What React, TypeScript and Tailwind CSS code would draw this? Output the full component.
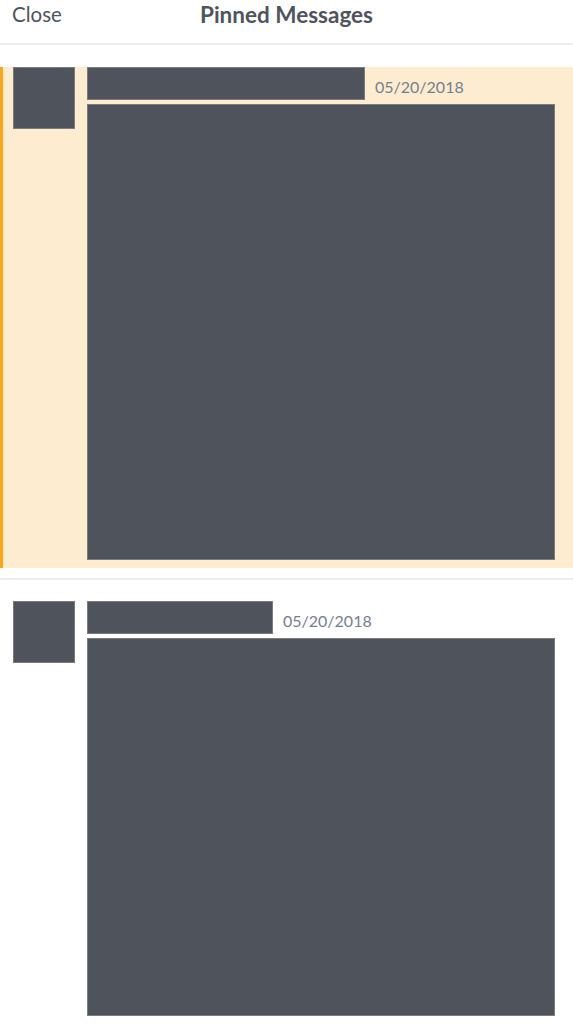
import React from 'react';

interface PinProps {
  nameWidth: number;
  imageHeight: number;
  date: string;
  highlighted?: boolean;
}

const block = 'bg-[#4f545c] border border-[#9a978f]/60';

const PinnedMessage: React.FC<PinProps> = ({ nameWidth, imageHeight, date, highlighted }) => {
  return (
    <div
      className={
        highlighted
          ? 'flex bg-[#feecd1] border-l-[3px] border-[#faa61a] pl-[10px] pr-[18px] pb-[8px]'
          : 'flex bg-white pl-[13px] pr-[18px] pt-[21px] pb-[8px]'
      }
    >
      <div className={`w-[62px] h-[62px] shrink-0 ${block}`} />
      <div className="ml-[12px] flex flex-col">
        <div className="flex items-center">
          <div className={`h-[33px] ${block}`} style={{ width: nameWidth }} />
          <span className="ml-[10px] mt-[7px] text-[16px] text-[#747f8d]">{date}</span>
        </div>
        <div className={`mt-[4px] w-[468px] ${block}`} style={{ height: imageHeight }} />
      </div>
    </div>
  );
};

const App: React.FC = () => {
  return (
    <div className="w-[573px] h-[1024px] overflow-hidden bg-white" style={{ fontFamily: 'Lato, "Open Sans", sans-serif' }}>
      <header className="relative h-[45px] border-b-2 border-[#ebedef]">
        <div className="flex items-start h-full">
          <span className="absolute left-[12px] top-0 leading-[29px] text-[20.5px] text-[#4f545c]">Close</span>
          <span className="w-full text-center leading-[29px] text-[22.5px] font-bold text-[#4f545c]">Pinned Messages</span>
        </div>
      </header>

      <div className="mt-[22px]">
        <PinnedMessage highlighted nameWidth={278} imageHeight={456} date="05/20/2018" />
      </div>

      <div className="mt-[10px] border-t-2 border-[#ebedef]">
        <PinnedMessage nameWidth={186} imageHeight={378} date="05/20/2018" />
      </div>
    </div>
  );
};

export default App;
